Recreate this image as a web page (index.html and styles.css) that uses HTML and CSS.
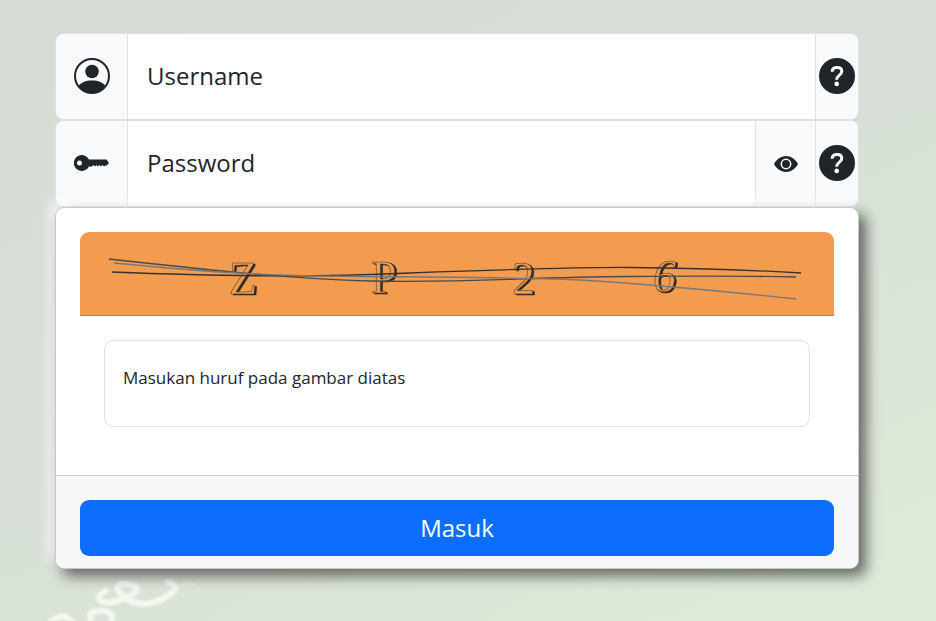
FILE: index.html
```html
<!DOCTYPE html>
<html lang="id">
<head>
    <meta charset="UTF-8">
    <meta name="viewport" content="width=device-width, initial-scale=1.0">
    <title>Masuk</title>
    <link rel="stylesheet" href="styles.css">
</head>
<body>
    <svg class="scribble" viewBox="0 0 240 60" aria-hidden="true">
        <path d="M106 30C98 34 96 39 104 41C113 43 133 36 137 29C139 23 121 21 118 25C115 31 130 44 146 43C160 41 171 34 175 28Q176 24 168 21"/>
        <path class="thin" d="M176 26Q187 23 194 23"/>
        <path d="M48 63Q60 53 66 56Q73 61 80 66"/>
        <path d="M97 68C87 58 88 50 98 50C114 48 115 57 107 68"/>
    </svg>
    <form class="login" action="#" method="post">
        <div class="input-group">
            <span class="input-text">
                <svg class="icon" viewBox="0 0 36 36" aria-hidden="true">
                    <circle cx="18" cy="18" r="17" fill="none" stroke="currentColor" stroke-width="2"/>
                    <circle cx="18" cy="13.5" r="6.8"/>
                    <path d="M4.500 28C7 24.500 11.500 22.500 18 22.500S29 24.500 31.500 28A17 17 0 0 1 4.500 28Z"/>
                </svg>
            </span>
            <div class="floating">
                <input type="text" id="username" name="username">
                <label for="username">Username</label>
            </div>
            <button class="input-text help" type="button" aria-label="Bantuan username">
                <svg class="icon" viewBox="0 0 36 36" aria-hidden="true">
                    <circle cx="18" cy="18" r="18"/>
                    <path class="mark" d="M13.200 13.700C13.200 10.800 15 9.400 18 9.400C21 9.400 22.800 11 22.800 13.300C22.800 15.400 21.500 16.500 20 17.600C18.300 18.800 17.700 19.700 17.700 21.700"/>
                    <circle class="dot" cx="17.700" cy="25.900" r="2.300"/>
                </svg>
            </button>
        </div>
        <div class="input-group">
            <span class="input-text">
                <svg class="icon" viewBox="0 0 36 36" aria-hidden="true">
                    <path fill-rule="evenodd" d="M15 14.500A8 8 0 1 0 15 21.500H18L19.500 20L21 21.500L22.500 20L24 21.500L25.500 20L27 21.500L28.500 20L30 21.500L31.500 20.500L32.500 20.800L35 18L32.500 14.500ZM5.500 15.500A2.500 2.500 0 1 1 5.500 20.500A2.500 2.500 0 1 1 5.500 15.500Z"/>
                </svg>
            </span>
            <div class="floating">
                <input type="password" id="password" name="password">
                <label for="password">Password</label>
            </div>
            <button class="input-text eye" type="button" aria-label="Lihat password">
                <svg class="icon-sm" viewBox="0 0 24 24" aria-hidden="true">
                    <path d="M0 12C2 8 6.500 4 12 4S22 8 24 12C22 16 17.500 20 12 20S2 16 0 12Z"/>
                    <circle class="ring" cx="12" cy="12" r="4.700"/>
                </svg>
            </button>
            <button class="input-text help" type="button" aria-label="Bantuan password">
                <svg class="icon" viewBox="0 0 36 36" aria-hidden="true">
                    <circle cx="18" cy="18" r="18"/>
                    <path class="mark" d="M13.200 13.700C13.200 10.800 15 9.400 18 9.400C21 9.400 22.800 11 22.800 13.300C22.800 15.400 21.500 16.500 20 17.600C18.300 18.800 17.700 19.700 17.700 21.700"/>
                    <circle class="dot" cx="17.700" cy="25.900" r="2.300"/>
                </svg>
            </button>
        </div>
        <div class="card">
            <div class="card-body">
                <svg class="captcha" viewBox="0 0 754 83" role="img" aria-label="Captcha">
                    <g class="captcha-text">
                        <text x="149" y="62">Z</text>
                        <text x="291" y="61">P</text>
                        <text x="432" y="62">2</text>
                        <text class="slant" x="573" y="60">6</text>
                    </g>
                    <g class="captcha-lines">
                        <path stroke="#333" d="M32 40C160 45 240 45 330 41C440 37 500 35 550 35.500C610 36 670 38 721 41"/>
                        <path stroke="#444b50" d="M29 27C110 36 210 47 290 49C400 51 440 45 550 44.500C610 44 670 44 716 45"/>
                        <path stroke="#777" d="M34 31C130 40 180 44 280 44.500C400 45 440 46 500 48C580 53 660 61 716 67"/>
                    </g>
                </svg>
                <div class="floating captcha-input">
                    <input type="text" id="captcha" name="captcha" autocomplete="off">
                    <label for="captcha">Masukan huruf pada gambar diatas</label>
                </div>
            </div>
            <div class="card-footer">
                <button class="btn" type="submit">Masuk</button>
            </div>
        </div>
    </form>
</body>
</html>
```

FILE: styles.css
```css
*,
*::after,
*::before{
    box-sizing: border-box;
}
body{
    margin: 0;
    min-height: 100vh;
    position: relative;
    overflow: hidden;
    font-family: "Open Sans", "Noto Sans", sans-serif;
    font-size: 24px;
    color: #212529;
    background: linear-gradient(155deg, #d5dcd4 0%, #d7dfd6 45%, #deebd9 100%);
}
input,
button{
    font: inherit;
    color: inherit;
}
svg{
    display: block;
    fill: currentColor;
}
.scribble{
    position: absolute;
    left: 0;
    bottom: 0;
    width: 240px;
    height: 60px;
    fill: none;
    stroke: #f7faf3;
    stroke-width: 6;
    stroke-linecap: round;
    opacity: .9;
    filter: blur(1px);
}
.scribble .thin{
    stroke-width: 3;
    opacity: .6;
}
.login{
    position: relative;
    padding: 33px 77px 52px 55px;
}
.input-group{
    display: flex;
    height: 87px;
    overflow: hidden;
    background: #fff;
    border: 1px solid #dee2e6;
    border-radius: 9px;
}
.input-text{
    display: flex;
    align-items: center;
    justify-content: center;
    width: 72px;
    padding: 0 0 2px;
    border: 0;
    border-right: 1px solid #dee2e6;
    background: #f8f9fa;
}
.eye,
.help{
    width: 60px;
    border-right: 0;
    border-left: 1px solid #dee2e6;
}
.eye{
    padding: 0;
}
.help{
    width: 43px;
}
.icon{
    width: 36px;
    height: 36px;
}
.icon-sm{
    width: 24px;
    height: 24px;
}
.mark{
    fill: none;
    stroke: #fff;
    stroke-width: 3;
}
.dot{
    fill: #fff;
}
.ring{
    fill: none;
    stroke: #fff;
    stroke-width: 1.5;
}
.floating{
    flex: 1;
    position: relative;
}
.floating input{
    display: block;
    width: 100%;
    height: 100%;
    padding: 24px 18px;
    border: 0;
    outline: 0;
    background: #fff;
}
.floating label{
    position: absolute;
    inset: 0;
    padding: 24px 19px;
    line-height: 36px;
    pointer-events: none;
}
.card{
    position: relative;
    border: 1px solid #c8c8c8;
    border-radius: 9px;
    background: #fff;
    box-shadow: 7px 7px 14px rgba(0, 0, 0, .55), -7px -7px 12px rgba(255, 255, 255, .6);
}
.card-body{
    padding: 24px 24px 48px;
}
.captcha{
    width: 100%;
    height: auto;
    border-bottom: 1px solid #c98244;
    border-radius: 9px 9px 0 0;
    background: #f39c50;
}
.captcha-text{
    font-family: "Liberation Serif", serif;
    font-size: 46px;
    fill: #f39c50;
    stroke: #333;
    stroke-width: .5;
    filter: drop-shadow(2px 1px 0 #2b2b2b);
}
.slant{
    font-style: italic;
}
.captcha-lines{
    fill: none;
    stroke-width: 1.3;
}
.captcha-input{
    height: 87px;
    margin: 24px 24px 0;
}
.captcha-input input{
    border: 1px solid #dee2e6;
    border-radius: 9px;
}
.captcha-input label{
    font-size: 17px;
    line-height: 27px;
}
.card-footer{
    padding: 24px 24px 12px;
    border-top: 1px solid #c8c8c8;
    border-radius: 0 0 8px 8px;
    background: #f7f7f7;
}
.btn{
    display: block;
    width: 100%;
    height: 56px;
    padding: 0 0 2px;
    border: 0;
    border-radius: 9px;
    background: #0d6efd;
    color: #fff;
}
```
